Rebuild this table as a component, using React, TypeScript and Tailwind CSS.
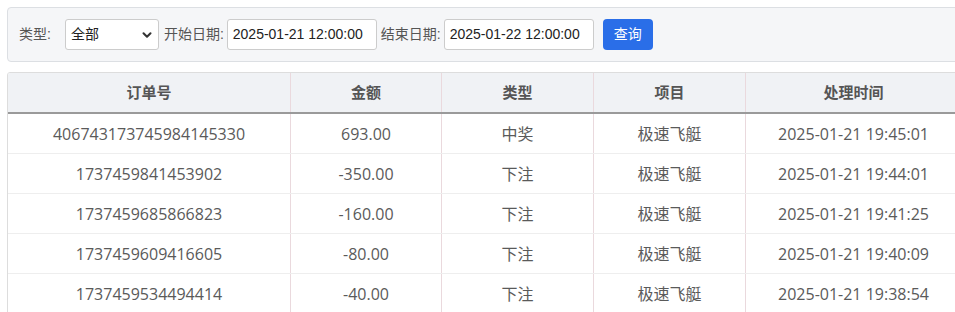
import { ChevronDown } from "lucide-react";

interface Row {
  id: string;
  amount: string;
  type: string;
  game: string;
  time: string;
}

const rows: Row[] = [
  { id: "406743173745984145330", amount: "693.00", type: "中奖", game: "极速飞艇", time: "2025-01-21 19:45:01" },
  { id: "1737459841453902", amount: "-350.00", type: "下注", game: "极速飞艇", time: "2025-01-21 19:44:01" },
  { id: "1737459685866823", amount: "-160.00", type: "下注", game: "极速飞艇", time: "2025-01-21 19:41:25" },
  { id: "1737459609416605", amount: "-80.00", type: "下注", game: "极速飞艇", time: "2025-01-21 19:40:09" },
  { id: "1737459534494414", amount: "-40.00", type: "下注", game: "极速飞艇", time: "2025-01-21 19:38:54" },
];

const cols = [
  { title: "订单号", w: "w-[282px]" },
  { title: "金额", w: "w-[151px]" },
  { title: "类型", w: "w-[152px]" },
  { title: "项目", w: "w-[152px]" },
  { title: "处理时间", w: "w-[216px]" },
];

const font = "font-['Liberation_Sans','Noto_Sans_CJK_SC',sans-serif]";
const cellFont = "font-['Open_Sans','Noto_Sans_CJK_SC',sans-serif]";

const App = () => {
  return (
    <div className="w-screen h-[312px] overflow-hidden bg-white">
      <div className={`w-[969px] px-[7px] pt-[7px] ${font}`}>
        <div className="flex items-center h-[55px] px-[10px] bg-[#f5f6f8] border border-[#dcdfe3] rounded text-[14px] text-[#555]">
          <span className="ml-[1px] mr-[14px]">类型:</span>
          <div className="relative w-[94px] h-[31px] bg-white border border-[#ccc] rounded-[3px] flex items-center pl-[5px] text-[#222]">
            全部
            <ChevronDown className="absolute right-[4px] top-[8px] w-[14px] h-[14px] text-[#333]" strokeWidth={3.5} />
          </div>
          <span className="ml-[5px] mr-[3px]">开始日期:</span>
          <div className="w-[150px] h-[31px] bg-white border border-[#ccc] rounded-[3px] flex items-center pl-[5px] text-[#222]">
            2025-01-21 12:00:00
          </div>
          <span className="ml-[4px] mr-[3px]">结束日期:</span>
          <div className="w-[150px] h-[31px] bg-white border border-[#ccc] rounded-[3px] flex items-center pl-[5px] text-[#222]">
            2025-01-22 12:00:00
          </div>
          <button className="ml-[9px] w-[50px] h-[31px] bg-[#2a6ee8] text-white rounded-[4px] text-[14px]">
            查询
          </button>
        </div>

        <div className="mt-[10px] border border-[#ddd] rounded-t-[3px] overflow-hidden">
          <div className="flex h-[41px] bg-[#f0f2f5] border-b-2 border-[#9a9a9a] text-[15px] font-bold text-[#555]">
            {cols.map((c, i) => (
              <div
                key={c.title}
                className={`${c.w} flex items-center justify-center ${i > 0 ? "border-l border-[#ead9dd]" : ""} ${cellFont}`}
              >
                {c.title}
              </div>
            ))}
          </div>
          {rows.map((r) => (
            <div key={r.id} className={`flex h-[40px] border-b border-[#eeeeee] text-[16px] text-[#5a5a5a] ${cellFont}`}>
              {[r.id, r.amount, r.type, r.game, r.time].map((v, i) => (
                <div
                  key={i}
                  className={`${cols[i].w} flex items-center justify-center ${i > 0 ? "border-l border-[#ead9dd]" : ""}`}
                >
                  {v}
                </div>
              ))}
            </div>
          ))}
        </div>
      </div>
    </div>
  );
};

export default App;
